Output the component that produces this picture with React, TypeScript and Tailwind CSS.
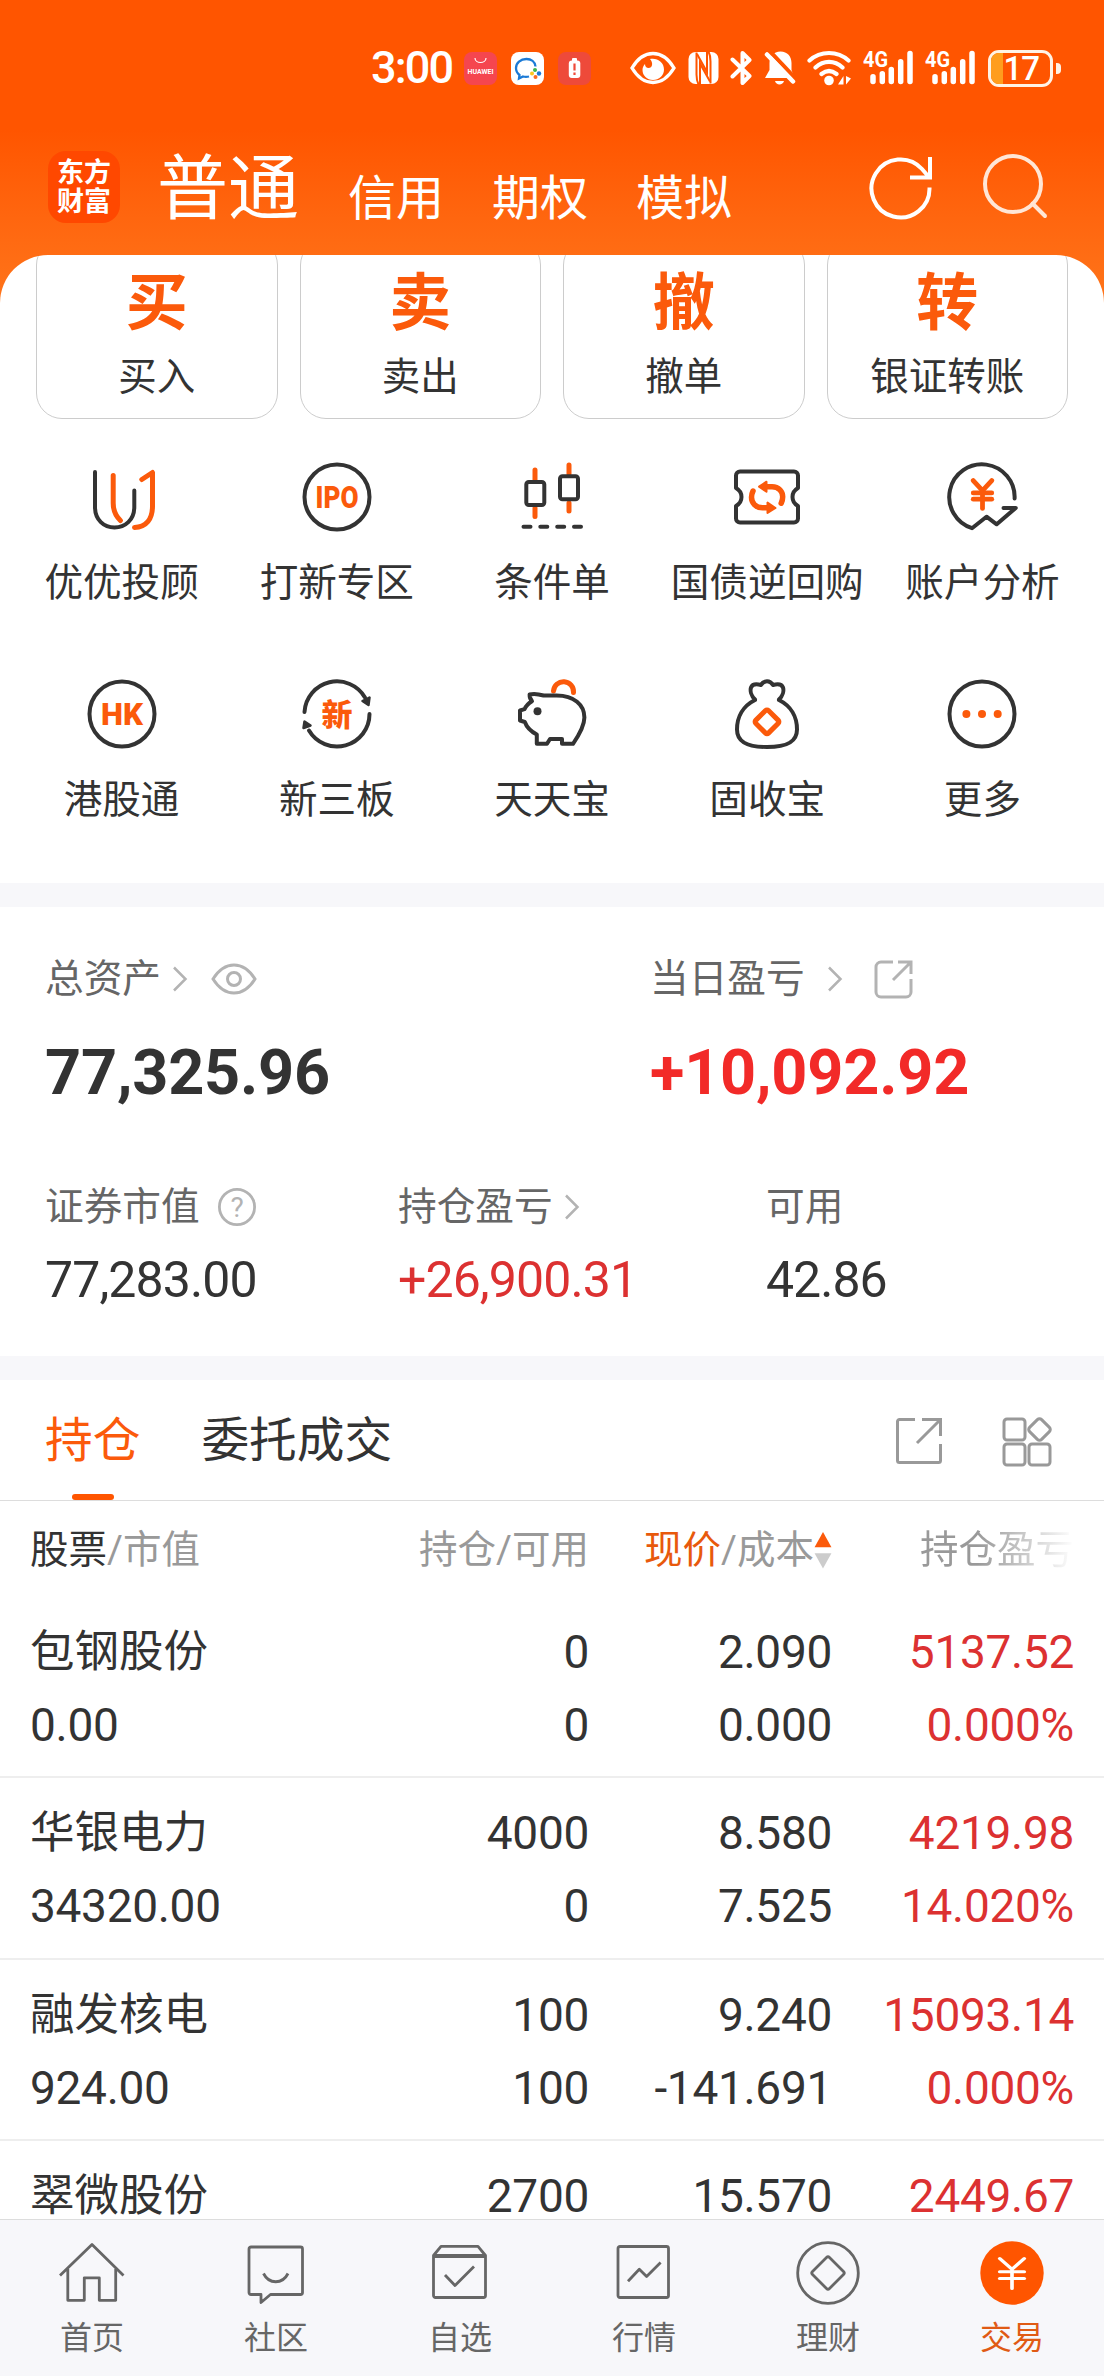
import type { ReactNode } from "react"
import { JapaneseYen } from "lucide-react"

const holdings = [
  { name: "包钢股份", value: "0.00", held: "0", available: "0", price: "2.090", cost: "0.000", profit: "5137.52", rate: "0.000%" },
  { name: "华银电力", value: "34320.00", held: "4000", available: "0", price: "8.580", cost: "7.525", profit: "4219.98", rate: "14.020%" },
  { name: "融发核电", value: "924.00", held: "100", available: "100", price: "9.240", cost: "-141.691", profit: "15093.14", rate: "0.000%" },
  { name: "翠微股份", held: "2700", price: "15.570", profit: "2449.67" },
]

const actions = [
  { icon: "买", label: "买入" },
  { icon: "卖", label: "卖出" },
  { icon: "撤", label: "撤单" },
  { icon: "转", label: "银证转账" },
]

function ToolIcon({ children }: { children: ReactNode }) {
  return (
    <svg
      width="80"
      height="80"
      viewBox="0 0 80 80"
      fill="none"
      stroke="#333"
      strokeWidth="4"
      strokeLinecap="round"
      strokeLinejoin="round"
    >
      {children}
    </svg>
  )
}

const tools = [
  {
    label: "优优投顾",
    icon: (
      <ToolIcon>
        <path d="M13 15v35c0 13 9 20.500 19.500 20.500S52.300 63 52.300 50V33.500" />
        <path d="M31.200 18.500V46c0 8 2 12.500 7.200 17.500M59.800 22.500l10.700-7V49c0 13-6 21-18 21.500" stroke="#fb5a0b" strokeWidth="5" />
      </ToolIcon>
    ),
  },
  {
    label: "打新专区",
    icon: (
      <ToolIcon>
        <circle cx="40" cy="40" r="32.500" />
        <text x="18.500" y="51" textLength="43" lengthAdjust="spacingAndGlyphs" className="text-[31px] font-black" fill="#fb5a0b" stroke="none">
          IPO
        </text>
      </ToolIcon>
    ),
  },
  {
    label: "条件单",
    icon: (
      <ToolIcon>
        <path d="M23 13v10M23 51v8.500M57 8v9M57 46v8" stroke="#fb5a0b" strokeWidth="5" />
        <rect x="14.300" y="25" width="18" height="23" rx="2.500" />
        <rect x="48" y="19.300" width="18" height="23" rx="2.500" />
        <path d="M11.500 69.700h7M28.300 69.700h7M45.200 69.700h7M62 69.700h7" />
      </ToolIcon>
    ),
  },
  {
    label: "国债逆回购",
    icon: (
      <ToolIcon>
        <path d="M13 14.500h54a4 4 0 0 1 4 4V31c-3.500 2-5.500 5-5.500 9s2 7 5.500 9v12.500a4 4 0 0 1-4 4H13a4 4 0 0 1-4-4V49c3.500-2 5.500-5 5.500-9S12.500 33 9 31V18.500a4 4 0 0 1 4-4Z" />
        <path d="M39 29.700h6c7 0 10.700 5 10.700 10 0 2.500-.500 4.500-1.500 6.500M41 50.800h-5.500c-7 0-11-5-11-10.500 0-2.300.500-4.300 1.500-6.300" stroke="#fb5a0b" strokeWidth="5.500" />
        <path d="M32 29.700l7.500-5v10zM48.500 51l-8-5.500v10.500z" fill="#fb5a0b" stroke="#fb5a0b" strokeWidth="2" />
      </ToolIcon>
    ),
  },
  {
    label: "账户分析",
    icon: (
      <ToolIcon>
        <path d="M72.600 41.500A32.700 32.700 0 1 0 30 71.200l14.500-11.500 10.200 7.600 19-16.400H61.500" />
        <JapaneseYen x="22" y="19" width="37" height="37" color="#fb5a0b" strokeWidth={3.100} />
      </ToolIcon>
    ),
  },
  {
    label: "港股通",
    icon: (
      <ToolIcon>
        <circle cx="40" cy="40" r="32.500" />
        <text x="19" y="51" textLength="42" lengthAdjust="spacingAndGlyphs" className="text-[31px] font-black" fill="#fb5a0b" stroke="none">
          HK
        </text>
      </ToolIcon>
    ),
  },
  {
    label: "新三板",
    icon: (
      <ToolIcon>
        <path d="M7.500 38A32.500 32.500 0 0 1 68 23.500M72.500 40A32.500 32.500 0 0 1 12 56.500" />
        <path d="M71.500 31l-6-4 7-3.500zM7.500 47.500l-1 6.500 7-2.500z" fill="#333" strokeWidth="2.500" />
        <text x="40" y="51.500" textAnchor="middle" className="text-[31px] font-black" fill="#fb5a0b" stroke="none">
          新
        </text>
      </ToolIcon>
    ),
  },
  {
    label: "天天宝",
    icon: (
      <ToolIcon>
        <path d="M41.500 17a10 10 0 0 1 20 1.500" stroke="#fb5a0b" strokeWidth="5" />
        <path d="M17.600 20.500c5-1.500 9-.500 14 1h13C62 21.500 72.400 31 72.400 43.500c0 7-5 17-11.400 26.300H50V65H38l-3 4.800H24.800v-9.300C19 57.500 15 54 12.800 48L8 46.500v-10l4.500-1.300c1.500-3.500 4-6 7.500-8-1.800-2-2.500-4-2.400-6.700Z" />
        <circle cx="25.500" cy="37.200" r="4" fill="#333" stroke="none" />
      </ToolIcon>
    ),
  },
  {
    label: "固收宝",
    icon: (
      <ToolIcon>
        <path d="M28 25.500c-4-4-5-9-4-12 1.500-4 6-3.500 10-2.500 1.500-2.500 3.500-3.700 6-3.700s4.500 1.200 6 3.700c4-1 8.500-1.500 10 2.500 1 3 0 8-4 12M28 26C16 32 10 43 10 55.500S20 73 40 73s30-5 30-17.500S64 32 52 26" />
        <rect x="31" y="38.800" width="18" height="18" rx="2" transform="rotate(45 40 47.800)" stroke="#fb5a0b" strokeWidth="5" />
      </ToolIcon>
    ),
  },
  {
    label: "更多",
    icon: (
      <ToolIcon>
        <circle cx="40" cy="40" r="32.500" />
        <g fill="#fb5a0b" stroke="none">
          <circle cx="24.400" cy="40" r="4" />
          <circle cx="40" cy="40" r="4" />
          <circle cx="55.700" cy="40" r="4" />
        </g>
      </ToolIcon>
    ),
  },
]

function TabIcon({ children }: { children: ReactNode }) {
  return (
    <svg width="70" height="70" viewBox="0 0 70 70" fill="none" stroke="#666" strokeWidth="2.800" strokeLinejoin="round">
      {children}
    </svg>
  )
}

const navItems = [
  {
    label: "首页",
    icon: (
      <TabIcon>
        <path d="M3 37.500 35 6.500l31.500 31M10.800 31v31.300h16.500V39.800h15v22.500h16.400V31" />
      </TabIcon>
    ),
  },
  {
    label: "社区",
    icon: (
      <TabIcon>
        <path d="M10 9h49.500a2 2 0 0 1 2 2v43.500a2 2 0 0 1-2 2h-30l-9.500 8v-8H10a2 2 0 0 1-2-2V11a2 2 0 0 1 2-2Z" />
        <path d="M22.500 35.500c5.500 11 19 11 24.500 0" />
      </TabIcon>
    ),
  },
  {
    label: "自选",
    icon: (
      <TabIcon>
        <path d="M8.500 17.500 16 8.300h37l7.500 9.200v40a2 2 0 0 1-2 2h-48a2 2 0 0 1-2-2zh52M20 37l10 10.500 19-19" />
        <path d="M8.500 18.500h52" />
      </TabIcon>
    ),
  },
  {
    label: "行情",
    icon: (
      <TabIcon>
        <rect x="9" y="8.500" width="50.500" height="51" rx="2" />
        <path d="m19 43.200 11.300-12 7.300 7.300 14-14" />
      </TabIcon>
    ),
  },
  {
    label: "理财",
    icon: (
      <TabIcon>
        <circle cx="35" cy="35" r="30.300" />
        <path d="M33.500 19.500q1.500-1.500 3 0l14 14q1.500 1.500 0 3l-14 14q-1.500 1.500-3 0l-14-14q-1.500-1.500 0-3z" />
      </TabIcon>
    ),
  },
  {
    label: "交易",
    active: true,
    icon: (
      <TabIcon>
        <circle cx="35" cy="35" r="31.700" fill="#ff5500" stroke="none" />
        <JapaneseYen x="10.500" y="15.500" width="49" height="40" preserveAspectRatio="none" color="#fff" strokeWidth={1.800} />
      </TabIcon>
    ),
  },
]

function Chevron({ className }: { className?: string }) {
  return (
    <svg className={className} width="16" height="26" viewBox="0 0 16 26" fill="none" stroke="#b3b3b3" strokeWidth="2.500">
      <path d="m2 1.500 11.500 11.500L2 24.500" />
    </svg>
  )
}

function Signal() {
  return (
    <svg width="51" height="36" viewBox="0 0 51 36" fill="none" stroke="#fff" strokeWidth="5.500" strokeLinecap="round">
      <text x="0" y="17" className="text-[22px] font-bold" textLength="25" lengthAdjust="spacingAndGlyphs" fill="#fff" stroke="none">
        4G
      </text>
      <path d="M10 26.800v4.700M19.300 23.800v7.700M28.300 19.500v12M37.700 11.800v19.700M47 3.500v28" />
    </svg>
  )
}

function StatusBar() {
  return (
    <div className="flex h-[136px] shrink-0 items-center pl-[371px] text-white">
      <span className="w-[93px] text-[45px] font-medium tracking-[-1.800px]">3:00</span>
      <div className="flex items-center gap-[14px]">
        <svg width="33" height="33" viewBox="0 0 33 33">
          <rect width="33" height="33" rx="8" fill="#f5464f" />
          <path d="M11 6c0 6 11 6 11 0" fill="none" stroke="#fff" strokeWidth="1.200" />
          <text x="3.500" y="21.500" textLength="26" lengthAdjust="spacingAndGlyphs" className="text-[7px] font-bold" fill="#fff">
            HUAWEI
          </text>
        </svg>
        <svg width="33" height="33" viewBox="0 0 33 33" fill="none">
          <rect width="33" height="33" rx="8" fill="#fff" />
          <path d="M24.500 14.500C24 9.500 20 7 15.500 7 9.500 7 5 11 5 16c0 3 1.500 5.500 3.500 7L8 26.500l4-2c2 .500 4 .500 6 0" stroke="#1b7ad6" strokeWidth="2.300" />
          <circle cx="24" cy="18" r="2" fill="#3cb54a" />
          <circle cx="28" cy="21.500" r="2.200" fill="#1b7ad6" />
          <circle cx="24.500" cy="25" r="2" fill="#fb6b1e" />
          <circle cx="21" cy="21.500" r="2" fill="#fbc61e" />
        </svg>
        <svg width="33" height="33" viewBox="0 0 33 33">
          <rect width="33" height="33" rx="8" fill="#ee4a3a" />
          <rect x="14" y="6" width="5" height="4" rx="1" fill="#fff" />
          <rect x="10.800" y="8.500" width="11.500" height="17.500" rx="3" fill="#fff" />
          <path d="M16.500 11.500v7M16.500 20.500v2.500" stroke="#ee4a3a" strokeWidth="2.200" />
        </svg>
      </div>
      <div className="ml-[39px] flex items-center gap-[11.500px]">
        <svg width="46" height="34" viewBox="0 0 46 34" fill="none">
          <path d="M2 17C8 7 15 2.500 23 2.500S38 7 44 17c-6 10-13 14.500-21 14.500S8 27 2 17Z" stroke="#fff" strokeWidth="3.400" />
          <path d="M20 8c7-1.500 14 3 14 10.500 0 6-5 10.500-11 10.500s-10.500-4.500-10.500-10c0-2.500 1-4.500 2.500-6 0 2.500 1.500 4 3.500 4 4 0 5-5 1.500-9Z" fill="#fff" />
        </svg>
        <svg width="31" height="34" viewBox="0 0 31 34" fill="none">
          <rect x="0.500" y="1" width="30" height="32" rx="7" fill="#fff" />
          <path d="M8.500 1.500v22c0 4 .500 7 2 10M22.500 32.500v-22c0-4-.500-7-2-10" stroke="#ff5500" strokeWidth="2" />
          <path d="M12 33V12.500l10 18M19 1v20L9 3" stroke="#ff5500" strokeWidth="2" />
        </svg>
        <svg width="22" height="36" viewBox="0 0 22 36" fill="none" stroke="#fff" strokeWidth="4" strokeLinejoin="round" strokeLinecap="round">
          <path d="m2.500 9.500 17 16.500-7 7V3l7 7-17 16.500" />
        </svg>
        <svg width="32" height="36" viewBox="0 0 32 36" fill="none">
          <path d="M16.500 1.500c7 0 11 5 11 11.500v7l3 8H1l4.500-8v-7c0-6.500 4-11.500 11-11.500ZM11 31h9c-1 4.500-8 4.500-9 0Z" fill="#fff" />
          <path d="M6 1.500 33 30" stroke="#ff5500" strokeWidth="4" />
          <path d="m3 4.500 26 27" stroke="#fff" strokeWidth="4.500" strokeLinecap="round" />
        </svg>
        <svg width="44" height="36" viewBox="0 0 44 36" fill="none" stroke="#fff" strokeWidth="4.200" strokeLinecap="round">
          <path d="M2.500 10.500c11-10 28-10 39 0M8.500 17.500c8-7.500 19-7.500 27 0M14.500 24c5-4 10-4 15 0" />
          <circle cx="22" cy="30.500" r="4.800" fill="#fff" stroke="none" />
          <path d="M36.500 26v8.500H31zM39 26v8.500l5-6z" fill="#fff" stroke="none" />
        </svg>
        <Signal />
        <Signal />
        <div className="flex items-center gap-[3px]">
          <div className="flex h-[37px] w-[65px] overflow-hidden rounded-[11px] border-[3px] border-[#fff3e6]">
            <div className="w-[12px] bg-[#ff9d1e]" />
            <span className="pl-[1px] text-[33px] leading-[31px] font-medium tracking-[-1px]">17</span>
          </div>
          <div className="h-[11px] w-[5px] rounded-r bg-[#fff3e6]" />
        </div>
      </div>
    </div>
  )
}

function Header() {
  return (
    <header className="mb-[17px] flex h-[102px] shrink-0 items-center pl-12 text-white">
      <div className="flex size-[72px] flex-col items-center justify-center rounded-[18px] bg-[#ff4800] pt-[2px] text-[27px] leading-[29px] font-bold">
        <span>东方</span>
        <span>财富</span>
      </div>
      <h1 className="mt-[4px] ml-[37px] text-[71px] leading-[72px]">普通</h1>
      <nav className="mt-[24px] ml-[49px] flex gap-12 text-[48px] leading-[50px]">
        <span>信用</span>
        <span>期权</span>
        <span>模拟</span>
      </nav>
      <svg className="ml-[137px]" width="66" height="66" viewBox="0 0 66 66" fill="none" stroke="#fff" strokeWidth="4">
        <path d="M60.500 33.500A29 29 0 1 1 53 15l6 7M61 3v20.500H41" />
      </svg>
      <svg className="ml-[47px]" width="66" height="66" viewBox="0 0 66 66" fill="none" stroke="#ffe6d6" strokeWidth="4">
        <circle cx="31" cy="30" r="28" />
        <path d="m50.500 49.500 12.500 12.500" strokeLinecap="round" />
      </svg>
    </header>
  )
}

function Assets() {
  return (
    <section className="h-[449px] px-[45px] pt-[52px] text-[38.700px] leading-10 text-[#666]">
      <div className="grid grid-cols-[605px_1fr]">
        <div>
          <div className="flex items-center">
            总资产
            <Chevron className="ml-[11px]" />
            <svg className="ml-[22px]" width="48" height="32" viewBox="0 0 48 32" fill="none" stroke="#b3b3b3" strokeWidth="3">
              <path d="M3 16C9 6.500 16 2 24 2s15 4.500 21 14c-6 9.500-13 14-21 14S9 25.500 3 16Z" />
              <circle cx="24" cy="16" r="6.500" />
            </svg>
          </div>
          <div className="mt-[42px] text-[63px] leading-16 font-bold tracking-[-0.200px] text-[#333]">77,325.96</div>
        </div>
        <div>
          <div className="flex items-center">
            当日盈亏
            <Chevron className="ml-[22px]" />
            <svg className="ml-[30px]" width="40" height="40" viewBox="0 0 40 40" fill="none" stroke="#b3b3b3" strokeWidth="3">
              <path d="M20 3H8a5 5 0 0 0-5 5v25a5 5 0 0 0 5 5h25a5 5 0 0 0 5-5V20M25 3h13v12M20 21 37 4" />
            </svg>
          </div>
          <div className="mt-[42px] text-[63px] leading-16 font-bold tracking-[-0.200px] text-[#f22a28]">+10,092.92</div>
        </div>
      </div>
      <div className="mt-[82px] grid grid-cols-[353px_368px_1fr]">
        <div>
          <div className="flex items-center">
            证券市值
            <svg className="ml-[17px]" width="40" height="40" viewBox="0 0 40 40" fill="none" stroke="#b3b3b3" strokeWidth="2.800">
              <circle cx="20" cy="20" r="17.600" />
              <text x="20" y="30" textAnchor="middle" className="text-[28px]" fill="#b3b3b3" stroke="none">
                ?
              </text>
            </svg>
          </div>
          <div className="mt-[28px] text-[50px] leading-[50px] tracking-[-0.900px] text-[#333]">77,283.00</div>
        </div>
        <div>
          <div className="flex items-center">
            持仓盈亏
            <Chevron className="ml-[11px]" />
          </div>
          <div className="mt-[28px] text-[50px] leading-[50px] tracking-[-0.900px] text-[#dc3131]">+26,900.31</div>
        </div>
        <div>
          <div>可用</div>
          <div className="mt-[28px] text-[50px] leading-[50px] tracking-[-1px] text-[#333]">42.86</div>
        </div>
      </div>
    </section>
  )
}

function Holdings() {
  return (
    <section>
      <div className="flex h-[121px] justify-between border-b border-[#ddd] pt-[37px] pr-[52px] pl-[45px]">
        <div className="flex gap-[61px] text-[47.700px] leading-[48px] text-[#333]">
          <div className="flex flex-col items-center justify-between text-[#fb5a0b]">
            持仓
            <div className="h-[6px] w-[42px] rounded-full bg-[#ff5500]" />
          </div>
          <div>委托成交</div>
        </div>
        <div className="flex gap-[59px]">
          <svg width="48" height="48" viewBox="0 0 48 48" fill="none" stroke="#999" strokeWidth="3">
            <path d="M20 2.500H4.500a2 2 0 0 0-2 2v39a2 2 0 0 0 2 2h39a2 2 0 0 0 2-2V27M27 2.500h18.500V19M22 26 45 3" />
          </svg>
          <svg width="50" height="50" viewBox="0 0 50 50" fill="none" stroke="#999" strokeWidth="3">
            <rect x="2" y="2" width="21" height="21" rx="3" />
            <rect x="2" y="27" width="21" height="21" rx="3" />
            <rect x="27" y="27" width="21" height="21" rx="3" />
            <rect x="29" y="4" width="17" height="17" rx="3" transform="rotate(45 37.500 12.500)" />
          </svg>
        </div>
      </div>
      <div className="grid h-[96px] grid-cols-[339px_220px_243px_242px] items-center px-[30px] pt-[2px] text-right text-[38.500px] text-[#999]">
        <div className="text-left">
          <span className="text-[#333]">股票</span>/市值
        </div>
        <div>持仓/可用</div>
        <div className="flex items-center justify-end">
          <span>
            <span className="text-[#e8590c]">现价</span>/成本
          </span>
          <svg width="18" height="38" viewBox="0 0 17 36">
            <path d="m8.500 1 8 14.500h-16z" fill="#fb5a0b" />
            <path d="m8.500 35.500 8-14.500h-16z" fill="#ccc" />
          </svg>
        </div>
        <div className="bg-linear-to-r from-[#999] from-60% to-white bg-clip-text text-transparent">持仓盈亏</div>
      </div>
      {holdings.map((row) => (
        <div
          key={row.name}
          className="grid h-[181.300px] grid-cols-[339px_220px_243px_242px] border-b-2 border-[#eee] px-[30px] pt-[19px] text-right text-[46px] leading-[73px] tracking-[-0.300px] text-[#333]"
        >
          <div className="text-left">
            <div className="text-[44.500px] tracking-normal">{row.name}</div>
            <div>{row.value}</div>
          </div>
          <div>
            <div>{row.held}</div>
            <div>{row.available}</div>
          </div>
          <div>
            <div>{row.price}</div>
            <div>{row.cost}</div>
          </div>
          <div className="text-[#dc3131]">
            <div>{row.profit}</div>
            <div>{row.rate}</div>
          </div>
        </div>
      ))}
    </section>
  )
}

export default function App() {
  return (
    <div className="flex h-[2376px] w-[1104px] flex-col overflow-hidden bg-linear-to-b from-[#ff5500] from-[130px] to-[#ff7419] to-[300px] font-['Roboto','Noto_Sans_CJK_SC',sans-serif]">
      <StatusBar />
      <Header />
      <main className="min-h-0 flex-1 overflow-hidden rounded-t-[48px] bg-white">
        <div className="-mt-4 grid grid-cols-4 gap-[22px] px-[36px]">
          {actions.map((action) => (
            <div
              key={action.label}
              className="flex h-[180px] flex-col items-center rounded-[26px] border-[1.500px] border-[#ccc] pt-[33px]"
            >
              <span className="text-[62px] leading-[62px] font-bold text-[#fb5a0b]">{action.icon}</span>
              <span className="mt-[23px] text-[38.500px] leading-[38px] text-[#333]">{action.label}</span>
            </div>
          ))}
        </div>
        <div className="mt-[38px] grid grid-cols-5 grid-rows-[217px_209px] px-[14px]">
          {tools.map((tool) => (
            <div key={tool.label} className="flex flex-col items-center whitespace-nowrap">
              {tool.icon}
              <span className="mt-[26px] text-[38.600px] leading-10 text-[#333]">{tool.label}</span>
            </div>
          ))}
        </div>
        <div className="h-6 bg-[#f7f7fa]" />
        <Assets />
        <div className="h-6 bg-[#f7f7fa]" />
        <Holdings />
      </main>
      <nav className="grid h-[157px] shrink-0 grid-cols-6 border-t border-[#ddd] bg-[#f7f7fa] pt-[18px]">
        {navItems.map((item) => (
          <div key={item.label} className="flex flex-col items-center">
            {item.icon}
            <span className={item.active ? "mt-[12px] text-[32px] leading-9 text-[#e05a14]" : "mt-[12px] text-[32px] leading-9 text-[#666]"}>
              {item.label}
            </span>
          </div>
        ))}
      </nav>
    </div>
  )
}
